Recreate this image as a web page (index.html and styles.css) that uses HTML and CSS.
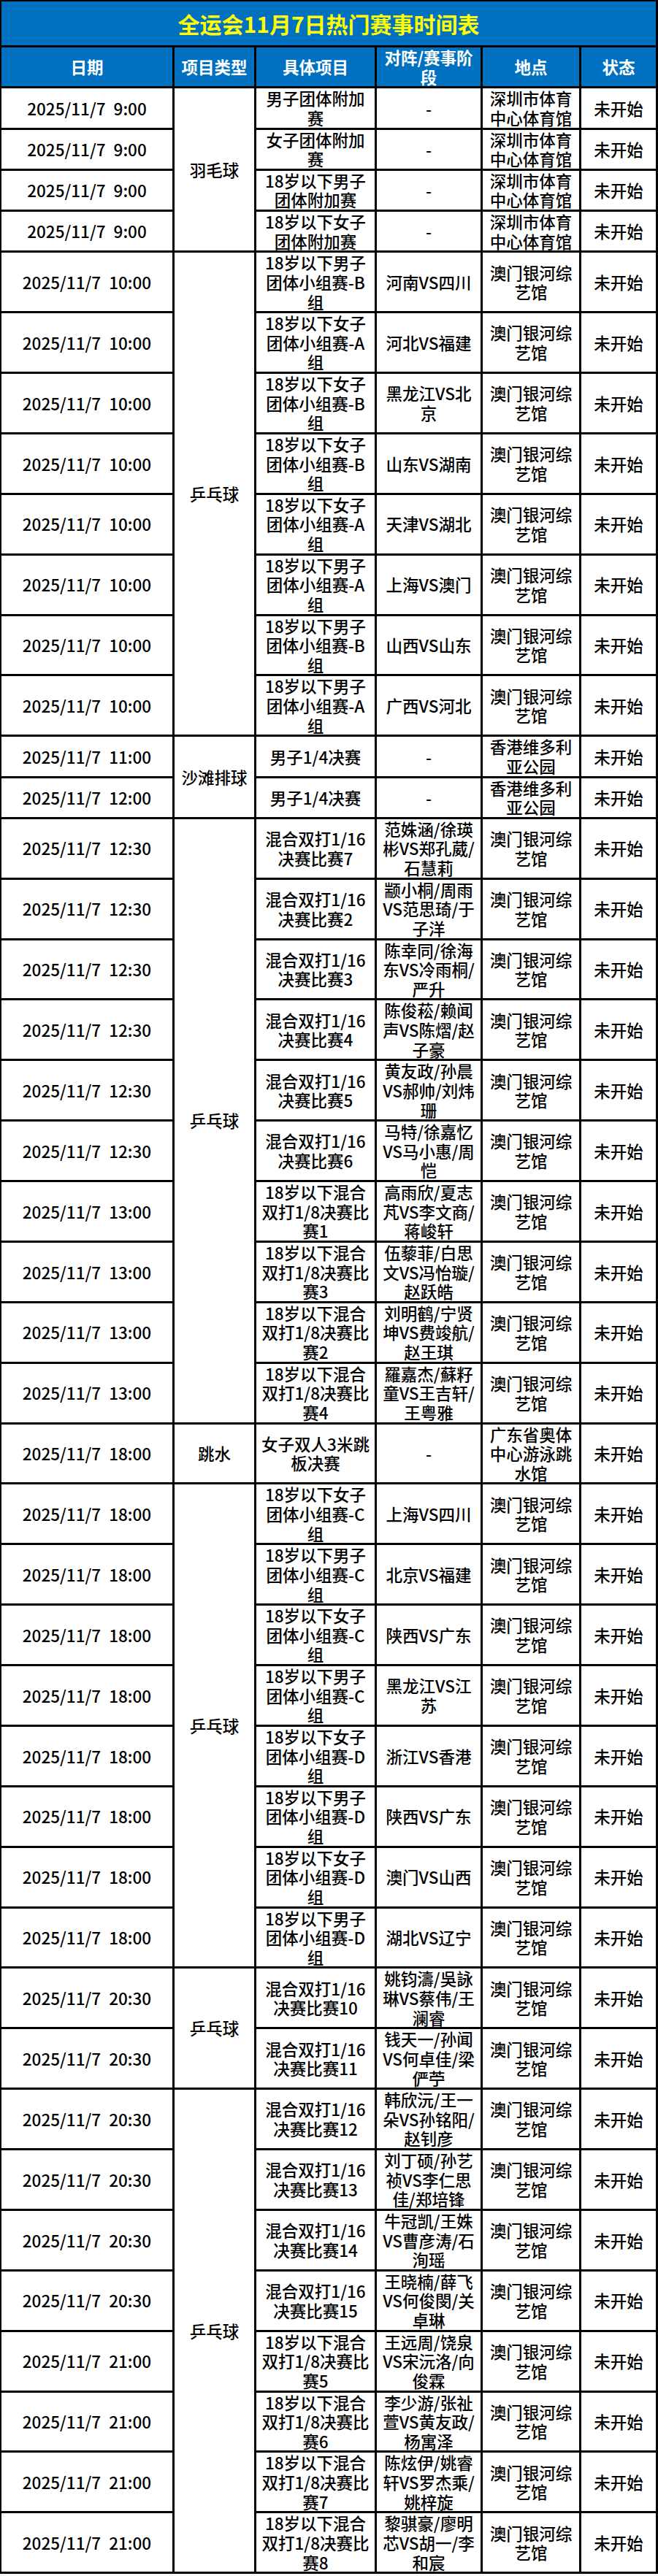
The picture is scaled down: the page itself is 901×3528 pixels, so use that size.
FILE: index.html
```html
<!DOCTYPE html>
<html lang="zh-CN">
<head>
<meta charset="utf-8">
<title>全运会11月7日热门赛事时间表</title>
<link rel="stylesheet" href="styles.css">
</head>
<body>
<table class="schedule">
<colgroup>
<col class="c-date"><col class="c-type"><col class="c-item"><col class="c-match"><col class="c-venue"><col class="c-status">
</colgroup>
<thead>
<tr><th class="title first" colspan="6">全运会11月7日热门赛事时间表</th></tr>
<tr class="head">
<th class="first">日期</th><th>项目类型</th><th>具体项目</th><th>对阵/赛事阶<br>段</th><th>地点</th><th>状态</th>
</tr>
</thead>
<tbody>
<tr><td class="first date">2025/11/7 9:00</td><td rowspan="4">羽毛球</td><td>男子团体附加<br>赛</td><td>-</td><td>深圳市体育<br>中心体育馆</td><td>未开始</td></tr>
<tr><td class="first date">2025/11/7 9:00</td><td>女子团体附加<br>赛</td><td>-</td><td>深圳市体育<br>中心体育馆</td><td>未开始</td></tr>
<tr><td class="first date">2025/11/7 9:00</td><td>18岁以下男子<br>团体附加赛</td><td>-</td><td>深圳市体育<br>中心体育馆</td><td>未开始</td></tr>
<tr><td class="first date">2025/11/7 9:00</td><td>18岁以下女子<br>团体附加赛</td><td>-</td><td>深圳市体育<br>中心体育馆</td><td>未开始</td></tr>

<tr><td class="first date">2025/11/7 10:00</td><td rowspan="8">乒乓球</td><td>18岁以下男子<br>团体小组赛-B<br>组</td><td>河南VS四川</td><td>澳门银河综<br>艺馆</td><td>未开始</td></tr>
<tr><td class="first date">2025/11/7 10:00</td><td>18岁以下女子<br>团体小组赛-A<br>组</td><td>河北VS福建</td><td>澳门银河综<br>艺馆</td><td>未开始</td></tr>
<tr><td class="first date">2025/11/7 10:00</td><td>18岁以下女子<br>团体小组赛-B<br>组</td><td>黑龙江VS北<br>京</td><td>澳门银河综<br>艺馆</td><td>未开始</td></tr>
<tr><td class="first date">2025/11/7 10:00</td><td>18岁以下女子<br>团体小组赛-B<br>组</td><td>山东VS湖南</td><td>澳门银河综<br>艺馆</td><td>未开始</td></tr>
<tr><td class="first date">2025/11/7 10:00</td><td>18岁以下女子<br>团体小组赛-A<br>组</td><td>天津VS湖北</td><td>澳门银河综<br>艺馆</td><td>未开始</td></tr>
<tr><td class="first date">2025/11/7 10:00</td><td>18岁以下男子<br>团体小组赛-A<br>组</td><td>上海VS澳门</td><td>澳门银河综<br>艺馆</td><td>未开始</td></tr>
<tr><td class="first date">2025/11/7 10:00</td><td>18岁以下男子<br>团体小组赛-B<br>组</td><td>山西VS山东</td><td>澳门银河综<br>艺馆</td><td>未开始</td></tr>
<tr><td class="first date">2025/11/7 10:00</td><td>18岁以下男子<br>团体小组赛-A<br>组</td><td>广西VS河北</td><td>澳门银河综<br>艺馆</td><td>未开始</td></tr>

<tr><td class="first date">2025/11/7 11:00</td><td rowspan="2">沙滩排球</td><td>男子1/4决赛</td><td>-</td><td>香港维多利<br>亚公园</td><td>未开始</td></tr>
<tr><td class="first date">2025/11/7 12:00</td><td>男子1/4决赛</td><td>-</td><td>香港维多利<br>亚公园</td><td>未开始</td></tr>

<tr><td class="first date">2025/11/7 12:30</td><td rowspan="10">乒乓球</td><td>混合双打1/16<br>决赛比赛7</td><td>范姝涵/徐瑛<br>彬VS郑孔葳/<br>石慧莉</td><td>澳门银河综<br>艺馆</td><td>未开始</td></tr>
<tr><td class="first date">2025/11/7 12:30</td><td>混合双打1/16<br>决赛比赛2</td><td>颛小桐/周雨<br>VS范思琦/于<br>子洋</td><td>澳门银河综<br>艺馆</td><td>未开始</td></tr>
<tr><td class="first date">2025/11/7 12:30</td><td>混合双打1/16<br>决赛比赛3</td><td>陈幸同/徐海<br>东VS冷雨桐/<br>严升</td><td>澳门银河综<br>艺馆</td><td>未开始</td></tr>
<tr><td class="first date">2025/11/7 12:30</td><td>混合双打1/16<br>决赛比赛4</td><td>陈俊菘/赖闻<br>声VS陈熠/赵<br>子豪</td><td>澳门银河综<br>艺馆</td><td>未开始</td></tr>
<tr><td class="first date">2025/11/7 12:30</td><td>混合双打1/16<br>决赛比赛5</td><td>黄友政/孙晨<br>VS郝帅/刘炜<br>珊</td><td>澳门银河综<br>艺馆</td><td>未开始</td></tr>
<tr><td class="first date">2025/11/7 12:30</td><td>混合双打1/16<br>决赛比赛6</td><td>马特/徐嘉忆<br>VS马小惠/周<br>恺</td><td>澳门银河综<br>艺馆</td><td>未开始</td></tr>
<tr><td class="first date">2025/11/7 13:00</td><td>18岁以下混合<br>双打1/8决赛比<br>赛1</td><td>高雨欣/夏志<br>芃VS李文商/<br>蒋峻轩</td><td>澳门银河综<br>艺馆</td><td>未开始</td></tr>
<tr><td class="first date">2025/11/7 13:00</td><td>18岁以下混合<br>双打1/8决赛比<br>赛3</td><td>伍藜菲/白思<br>文VS冯怡璇/<br>赵跃皓</td><td>澳门银河综<br>艺馆</td><td>未开始</td></tr>
<tr><td class="first date">2025/11/7 13:00</td><td>18岁以下混合<br>双打1/8决赛比<br>赛2</td><td>刘明鹤/宁贤<br>坤VS费竣航/<br>赵王琪</td><td>澳门银河综<br>艺馆</td><td>未开始</td></tr>
<tr><td class="first date">2025/11/7 13:00</td><td>18岁以下混合<br>双打1/8决赛比<br>赛4</td><td>羅嘉杰/蘇籽<br>童VS王吉轩/<br>王粤雅</td><td>澳门银河综<br>艺馆</td><td>未开始</td></tr>

<tr><td class="first date">2025/11/7 18:00</td><td>跳水</td><td>女子双人3米跳<br>板决赛</td><td>-</td><td>广东省奥体<br>中心游泳跳<br>水馆</td><td>未开始</td></tr>

<tr><td class="first date">2025/11/7 18:00</td><td rowspan="8">乒乓球</td><td>18岁以下女子<br>团体小组赛-C<br>组</td><td>上海VS四川</td><td>澳门银河综<br>艺馆</td><td>未开始</td></tr>
<tr><td class="first date">2025/11/7 18:00</td><td>18岁以下男子<br>团体小组赛-C<br>组</td><td>北京VS福建</td><td>澳门银河综<br>艺馆</td><td>未开始</td></tr>
<tr><td class="first date">2025/11/7 18:00</td><td>18岁以下女子<br>团体小组赛-C<br>组</td><td>陕西VS广东</td><td>澳门银河综<br>艺馆</td><td>未开始</td></tr>
<tr><td class="first date">2025/11/7 18:00</td><td>18岁以下男子<br>团体小组赛-C<br>组</td><td>黑龙江VS江<br>苏</td><td>澳门银河综<br>艺馆</td><td>未开始</td></tr>
<tr><td class="first date">2025/11/7 18:00</td><td>18岁以下女子<br>团体小组赛-D<br>组</td><td>浙江VS香港</td><td>澳门银河综<br>艺馆</td><td>未开始</td></tr>
<tr><td class="first date">2025/11/7 18:00</td><td>18岁以下男子<br>团体小组赛-D<br>组</td><td>陕西VS广东</td><td>澳门银河综<br>艺馆</td><td>未开始</td></tr>
<tr><td class="first date">2025/11/7 18:00</td><td>18岁以下女子<br>团体小组赛-D<br>组</td><td>澳门VS山西</td><td>澳门银河综<br>艺馆</td><td>未开始</td></tr>
<tr><td class="first date">2025/11/7 18:00</td><td>18岁以下男子<br>团体小组赛-D<br>组</td><td>湖北VS辽宁</td><td>澳门银河综<br>艺馆</td><td>未开始</td></tr>

<tr><td class="first date">2025/11/7 20:30</td><td rowspan="2">乒乓球</td><td>混合双打1/16<br>决赛比赛10</td><td>姚钧濤/吳詠<br>琳VS蔡伟/王<br>澜睿</td><td>澳门银河综<br>艺馆</td><td>未开始</td></tr>
<tr><td class="first date">2025/11/7 20:30</td><td>混合双打1/16<br>决赛比赛11</td><td>钱天一/孙闻<br>VS何卓佳/梁<br>俨苧</td><td>澳门银河综<br>艺馆</td><td>未开始</td></tr>

<tr><td class="first date">2025/11/7 20:30</td><td rowspan="8">乒乓球</td><td>混合双打1/16<br>决赛比赛12</td><td>韩欣沅/王一<br>朵VS孙铭阳/<br>赵钊彦</td><td>澳门银河综<br>艺馆</td><td>未开始</td></tr>
<tr><td class="first date">2025/11/7 20:30</td><td>混合双打1/16<br>决赛比赛13</td><td>刘丁硕/孙艺<br>祯VS李仁思<br>佳/郑培锋</td><td>澳门银河综<br>艺馆</td><td>未开始</td></tr>
<tr><td class="first date">2025/11/7 20:30</td><td>混合双打1/16<br>决赛比赛14</td><td>牛冠凯/王姝<br>VS曹彦涛/石<br>洵瑶</td><td>澳门银河综<br>艺馆</td><td>未开始</td></tr>
<tr><td class="first date">2025/11/7 20:30</td><td>混合双打1/16<br>决赛比赛15</td><td>王晓楠/薛飞<br>VS何俊閔/关<br>卓琳</td><td>澳门银河综<br>艺馆</td><td>未开始</td></tr>
<tr><td class="first date">2025/11/7 21:00</td><td>18岁以下混合<br>双打1/8决赛比<br>赛5</td><td>王远周/饶泉<br>VS宋沅洛/向<br>俊霖</td><td>澳门银河综<br>艺馆</td><td>未开始</td></tr>
<tr><td class="first date">2025/11/7 21:00</td><td>18岁以下混合<br>双打1/8决赛比<br>赛6</td><td>李少游/张祉<br>萱VS黄友政/<br>杨寓泽</td><td>澳门银河综<br>艺馆</td><td>未开始</td></tr>
<tr><td class="first date">2025/11/7 21:00</td><td>18岁以下混合<br>双打1/8决赛比<br>赛7</td><td>陈炫伊/姚睿<br>轩VS罗杰乘/<br>姚梓旋</td><td>澳门银河综<br>艺馆</td><td>未开始</td></tr>
<tr><td class="first date">2025/11/7 21:00</td><td>18岁以下混合<br>双打1/8决赛比<br>赛8</td><td>黎骐豪/廖明<br>芯VS胡一/李<br>和宸</td><td>澳门银河综<br>艺馆</td><td>未开始</td></tr>
</tbody>
</table>
</body>
</html>
```

FILE: styles.css
```css
html, body {
  margin: 0;
  padding: 0;
  background: #ffffff;
}

body {
  font-family: "Noto Sans CJK SC", "Noto Sans", sans-serif;
  color: #000000;
}

.schedule {
  width: 901px;
  table-layout: fixed;
  border-collapse: separate;
  border-spacing: 0;
}

.c-date { width: 239px; }
.c-type { width: 112px; }
.c-item { width: 165px; }
.c-match { width: 145px; }
.c-venue { width: 135px; }
.c-status { width: 105px; }

.schedule th,
.schedule td {
  padding: 0;
  border-right: 3px solid #000000;
  border-bottom: 3px solid #000000;
  text-align: center;
  vertical-align: middle;
  font-size: 22.5px;
  line-height: 26.63px;
  font-weight: 500;
  white-space: nowrap;
}

.schedule .first {
  border-left: 2px solid #000000;
}

.schedule .title {
  border-top: 2px solid #000000;
  background: #0070c0;
  color: #ffff00;
  font-size: 30px;
  line-height: 60px;
  font-weight: 700;
}

.head th {
  background: #0070c0;
  color: #ffffff;
  font-weight: 700;
}

.date {
  word-spacing: 6px;
}
```
